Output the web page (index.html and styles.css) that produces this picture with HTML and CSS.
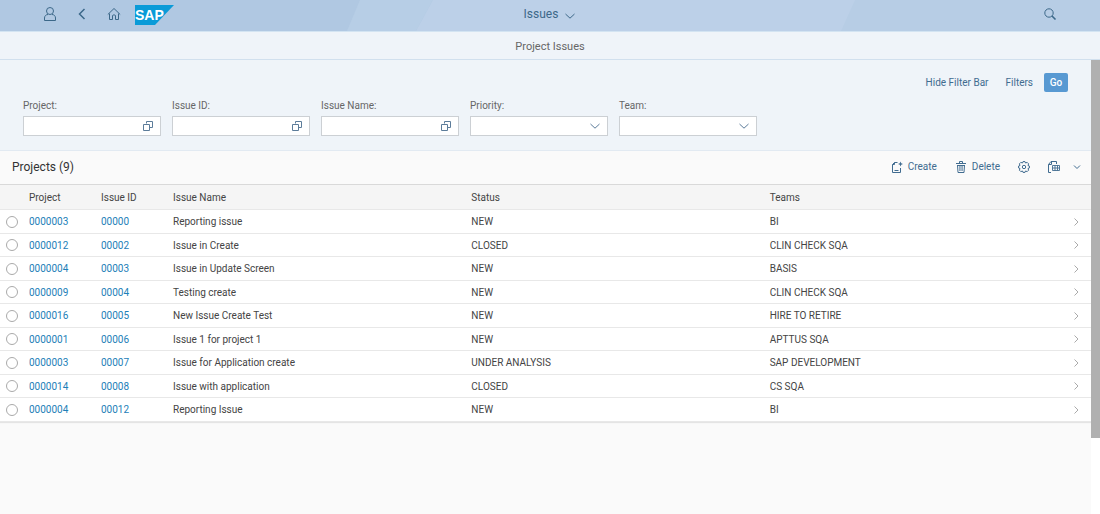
FILE: index.html
```html
<!DOCTYPE html>
<html lang="en">
<head>
<meta charset="utf-8">
<meta name="viewport" content="width=device-width, initial-scale=1">
<title>Project Issues</title>
<link rel="stylesheet" href="styles.css">
</head>
<body>
<svg class="defs" width="0" height="0" aria-hidden="true">
  <symbol id="i-help" viewBox="0 0 12 12"><path d="M4.500 3.500V1.500H10.500V7.500H7.500M1.500 4.500H7.500V10.500H1.500Z"/></symbol>
  <symbol id="i-down" viewBox="0 0 12 12"><path d="M1.500 4L6 8.200L10.500 4"/></symbol>
  <symbol id="i-next" viewBox="0 0 8 10"><path d="M2.500 1.500L6 5L2.500 8.500"/></symbol>
</svg>
<header class="shell">
  <svg class="shell-art" viewBox="0 0 1100 31" preserveAspectRatio="none" aria-hidden="true">
    <path d="M360 0H433L416 31H347Z" fill="#b7cee6"/>
    <path d="M433 0H855L841 31H416Z" fill="#bcd0e8"/>
  </svg>
  <nav class="shell-left">
    <button class="icon-btn" aria-label="User"><svg class="icon" width="14" height="16" viewBox="0 0 14 16"><circle cx="7" cy="5" r="3.500"/><path d="M5 8.500C3 8.500 1.500 10 1.500 12V14.500H12.500V12C12.500 10 11 8.500 9 8.500"/></svg></button>
    <button class="icon-btn" aria-label="Back"><svg class="icon back" width="14" height="16" viewBox="0 0 14 16"><path d="M9.500 3L4.500 8L9.500 13"/></svg></button>
    <button class="icon-btn" aria-label="Home"><svg class="icon" width="14" height="16" viewBox="0 0 14 16"><path d="M.8 8.500L7 2.500L13.200 8.500M2.500 7.500V13.500H5.500V9.500Q7 8 8.500 9.500V13.500H11.500V7.500"/></svg></button>
    <a class="logo" href="#" aria-label="SAP"><svg width="40" height="20" viewBox="0 0 40 20"><path d="M0 0H39L20 20H0Z" fill="#0a9bd8"/><text class="logo-text" x="0" y="15">SAP</text></svg></a>
  </nav>
  <button class="shell-title">Issues <svg class="icon" width="12" height="12"><use href="#i-down"/></svg></button>
  <div class="shell-right">
    <button class="icon-btn" aria-label="Search"><svg class="icon" width="14" height="16" viewBox="0 0 14 16"><circle cx="6" cy="7" r="4.200"/><path d="M9 10L12.500 13.500" stroke-width="1.600"/></svg></button>
  </div>
</header>
<h1 class="page-title">Project Issues</h1>
<div class="viewport">
  <main class="content">
    <form class="filters">
      <div class="filter-actions">
        <button type="button" class="link-btn">Hide Filter Bar</button>
        <button type="button" class="link-btn">Filters</button>
        <button type="button" class="go">Go</button>
      </div>
      <div class="fields">
        <div class="field"><label for="f-project">Project:</label><div class="control"><input id="f-project" type="text"><button type="button" class="help" aria-label="Project value help"><svg class="icon" width="12" height="12"><use href="#i-help"/></svg></button></div></div>
        <div class="field"><label for="f-id">Issue ID:</label><div class="control"><input id="f-id" type="text"><button type="button" class="help" aria-label="Issue ID value help"><svg class="icon" width="12" height="12"><use href="#i-help"/></svg></button></div></div>
        <div class="field"><label for="f-name">Issue Name:</label><div class="control"><input id="f-name" type="text"><button type="button" class="help" aria-label="Issue Name value help"><svg class="icon" width="12" height="12"><use href="#i-help"/></svg></button></div></div>
        <div class="field"><label for="f-priority">Priority:</label><div class="control"><select id="f-priority"><option></option></select><svg class="icon arrow" width="12" height="12"><use href="#i-down"/></svg></div></div>
        <div class="field"><label for="f-team">Team:</label><div class="control"><select id="f-team"><option></option></select><svg class="icon arrow" width="12" height="12"><use href="#i-down"/></svg></div></div>
      </div>
    </form>
    <section class="list">
      <div class="toolbar">
        <h2 class="list-title">Projects (9)</h2>
        <div class="tools">
          <button class="tool"><svg class="icon" width="12" height="12" viewBox="0 0 12 12"><path d="M6.500 1.500H3.500L1.500 3.500V11.500H9.500V7M3.500 9.500H7.500M1.500 3.500H3.500V1.500"/><path d="M9.500 .5L10.200 2.300L12 3L10.200 3.700L9.500 5.500L8.800 3.700L7 3L8.800 2.300Z" fill="currentColor" stroke="none"/></svg>Create</button>
          <button class="tool"><svg class="icon" width="12" height="12" viewBox="0 0 12 12"><path d="M1 2.500H11M4.500 2.500V.5H7.500V2.500M2.500 4L3 11.500H9L9.500 4M2 4.500H10"/><path d="M4.700 5V10M6 5V10M7.300 5V10" stroke-width=".7"/></svg>Delete</button>
          <button class="tool" aria-label="Settings"><svg class="icon" width="12" height="12" viewBox="0 0 12 12"><path d="M5 .6H7L7.500 2L9.200 1.400L10.600 2.800L10 4.500L11.400 5V7L10 7.500L10.600 9.200L9.200 10.600L7.500 10L7 11.400H5L4.500 10L2.800 10.600L1.400 9.200L2 7.500L.6 7V5L2 4.500L1.400 2.800L2.800 1.400L4.500 2Z"/><circle cx="6" cy="6" r="1.700"/></svg></button>
          <div class="export">
            <button class="tool" aria-label="Export"><svg class="icon" width="12" height="12" viewBox="0 0 12 12"><path d="M8.500 3V.5H3L.5 3.500V11.500H3M3.500 .5V3.500H.5"/><path d="M4.500 4.500H11.500V9.500H4.500ZM4.500 7H11.500M7 4.500V9.500M9.500 4.500V9.500" stroke-width=".9"/></svg></button>
            <button class="tool more" aria-label="Export options"><svg class="icon" width="8" height="8" viewBox="0 0 8 8"><path d="M1 2.500L4 5.500L7 2.500"/></svg></button>
          </div>
        </div>
      </div>
      <table class="issues">
        <colgroup><col class="c-sel"><col class="c-id"><col class="c-id"><col><col><col><col class="c-nav"></colgroup>
        <thead><tr><td></td><th scope="col">Project</th><th scope="col">Issue ID</th><th scope="col">Issue Name</th><th scope="col">Status</th><th scope="col">Teams</th><td></td></tr></thead>
        <tbody>
          <tr><td class="sel"><input type="radio" name="row" aria-label="Select issue 00000"></td><td><a href="#">0000003</a></td><td><a href="#">00000</a></td><td>Reporting issue</td><td>NEW</td><td>BI</td><td class="nav"><svg class="icon" width="8" height="10"><use href="#i-next"/></svg></td></tr>
          <tr><td class="sel"><input type="radio" name="row" aria-label="Select issue 00002"></td><td><a href="#">0000012</a></td><td><a href="#">00002</a></td><td>Issue in Create</td><td>CLOSED</td><td>CLIN CHECK SQA</td><td class="nav"><svg class="icon" width="8" height="10"><use href="#i-next"/></svg></td></tr>
          <tr><td class="sel"><input type="radio" name="row" aria-label="Select issue 00003"></td><td><a href="#">0000004</a></td><td><a href="#">00003</a></td><td>Issue in Update Screen</td><td>NEW</td><td>BASIS</td><td class="nav"><svg class="icon" width="8" height="10"><use href="#i-next"/></svg></td></tr>
          <tr><td class="sel"><input type="radio" name="row" aria-label="Select issue 00004"></td><td><a href="#">0000009</a></td><td><a href="#">00004</a></td><td>Testing create</td><td>NEW</td><td>CLIN CHECK SQA</td><td class="nav"><svg class="icon" width="8" height="10"><use href="#i-next"/></svg></td></tr>
          <tr><td class="sel"><input type="radio" name="row" aria-label="Select issue 00005"></td><td><a href="#">0000016</a></td><td><a href="#">00005</a></td><td>New Issue Create Test</td><td>NEW</td><td>HIRE TO RETIRE</td><td class="nav"><svg class="icon" width="8" height="10"><use href="#i-next"/></svg></td></tr>
          <tr><td class="sel"><input type="radio" name="row" aria-label="Select issue 00006"></td><td><a href="#">0000001</a></td><td><a href="#">00006</a></td><td>Issue 1 for project 1</td><td>NEW</td><td>APTTUS SQA</td><td class="nav"><svg class="icon" width="8" height="10"><use href="#i-next"/></svg></td></tr>
          <tr><td class="sel"><input type="radio" name="row" aria-label="Select issue 00007"></td><td><a href="#">0000003</a></td><td><a href="#">00007</a></td><td>Issue for Application create</td><td>UNDER ANALYSIS</td><td>SAP DEVELOPMENT</td><td class="nav"><svg class="icon" width="8" height="10"><use href="#i-next"/></svg></td></tr>
          <tr><td class="sel"><input type="radio" name="row" aria-label="Select issue 00008"></td><td><a href="#">0000014</a></td><td><a href="#">00008</a></td><td>Issue with application</td><td>CLOSED</td><td>CS SQA</td><td class="nav"><svg class="icon" width="8" height="10"><use href="#i-next"/></svg></td></tr>
          <tr><td class="sel"><input type="radio" name="row" aria-label="Select issue 00012"></td><td><a href="#">0000004</a></td><td><a href="#">00012</a></td><td>Reporting Issue</td><td>NEW</td><td>BI</td><td class="nav"><svg class="icon" width="8" height="10"><use href="#i-next"/></svg></td></tr>
        </tbody>
      </table>
    </section>
  </main>
  <div class="scroll-track" aria-hidden="true"><div class="scroll-thumb"></div></div>
</div>
</body>
</html>
```

FILE: styles.css
```css
* { box-sizing: border-box; }

body {
  margin: 0;
  min-height: 100vh;
  display: flex;
  flex-direction: column;
  background: #fff;
  color: #444;
  font: 10px/12px Roboto, "Open Sans", sans-serif;
}

button, input, select { font: inherit; color: inherit; margin: 0; padding: 0; }
button { border: 0; background: none; cursor: pointer; }
a { text-decoration: none; }
h1, h2 { margin: 0; font-weight: 400; }

.defs { position: absolute; }
.icon { display: block; fill: none; stroke: currentColor; stroke-width: 1; flex: none; }

/* Shell header */
.shell {
  position: relative;
  display: grid;
  grid-template-columns: 1fr auto 1fr;
  align-items: center;
  height: 32px;
  padding: 0 43px;
  background: linear-gradient(90deg, #b0c8e2 0 50%, #b7cde5 50%);
  border-bottom: 1px solid #d3e4f2;
  color: #3c6889;
}
.shell-art { position: absolute; inset: 0; width: 100%; height: 100%; }
.shell-left, .shell-right, .shell-title { position: relative; display: flex; align-items: center; }
.shell-left { gap: 18px; padding-bottom: 3px; }
.shell-right { justify-content: flex-end; padding-bottom: 3px; }
.shell-title { gap: 6px; font-size: 12px; line-height: 14px; padding-bottom: 4px; }
.shell-title .icon { margin-top: 4px; }
.back { stroke-width: 1.5; }
.logo { display: block; margin-left: -4px; padding-top: 2px; }
.logo svg { display: block; }
.logo-text { font: bold 14px "Liberation Sans", Arial, sans-serif; fill: #fff; }

.page-title {
  padding: 8px 0 5px;
  background: #eff4f9;
  border-bottom: 1px solid #d1e0ee;
  color: #666;
  font-size: 11px;
  line-height: 14px;
  text-align: center;
}

/* Scrollable page area */
.viewport { flex: 1; display: grid; grid-template-columns: 1fr 9px; }
.content { background: #fafafa; }
.scroll-thumb { height: 83.3%; background: #b0b0b0; }

/* Filter bar */
.filters { padding: 13px 23px 14px; background: #eff4f9; border-bottom: 1px solid #e2eaf2; }
.filter-actions { display: flex; justify-content: flex-end; align-items: center; gap: 17px; color: #416c90; }
.go {
  width: 24px;
  height: 19px;
  margin-left: -6px;
  border-radius: 2px;
  background: #5899d2;
  color: #fff;
  font-weight: 500;
}
.fields { display: grid; grid-template-columns: repeat(auto-fill, 138px); gap: 11px; padding-top: 8px; }
.field { display: grid; grid-template-columns: minmax(0, 1fr); gap: 4px; color: #666; }
.control { display: flex; align-items: center; position: relative; height: 20px; border: 1px solid #ccd0d4; background: #fff; color: #5c7c9a; }
.control input { flex: 1; width: 0; min-width: 0; border: 0; background: none; padding-left: 6px; }
.control select { appearance: none; width: 100%; height: 100%; border: 0; background: none; padding-left: 6px; }
.help { padding-right: 6px; }
.arrow { position: absolute; right: 6px; pointer-events: none; }

/* List */
.toolbar {
  display: flex;
  justify-content: space-between;
  align-items: center;
  height: 34px;
  padding: 0 10px 2px 12px;
  border-bottom: 1px solid #d9d9d9;
}
.list-title { font-size: 12px; line-height: 14px; color: #333; }
.tools { display: flex; align-items: center; gap: 18px; color: #416c90; }
.tool { display: flex; align-items: center; gap: 5px; }
.export { display: flex; align-items: center; gap: 13px; }

.issues {
  width: 100%;
  table-layout: fixed;
  border-collapse: separate;
  border-spacing: 0;
  background: #fff;
  box-shadow: 0 1px 1px #e4e4e4;
}
.c-sel { width: 24px; }
.c-id { width: 72px; }
.c-nav { width: 28px; }
.issues th, .issues td { padding: 1px 0 0 5px; text-align: left; vertical-align: middle; font-weight: 400; border-bottom: 1px solid #e8e8e8; }
.issues thead tr { height: 25px; background: #f5f5f5; color: #444; }
.issues tbody tr { height: 24px; }
.issues tbody tr:nth-child(even) { height: 23px; }
.issues a { color: #1d80b8; }
.issues .sel { padding: 0 6px; }
.sel input { appearance: none; display: block; width: 12px; height: 12px; border: 1px solid #aaa; border-radius: 50%; background: #fff; }
.issues .nav { padding: 0 0 0 9px; color: #aaa; }
```
